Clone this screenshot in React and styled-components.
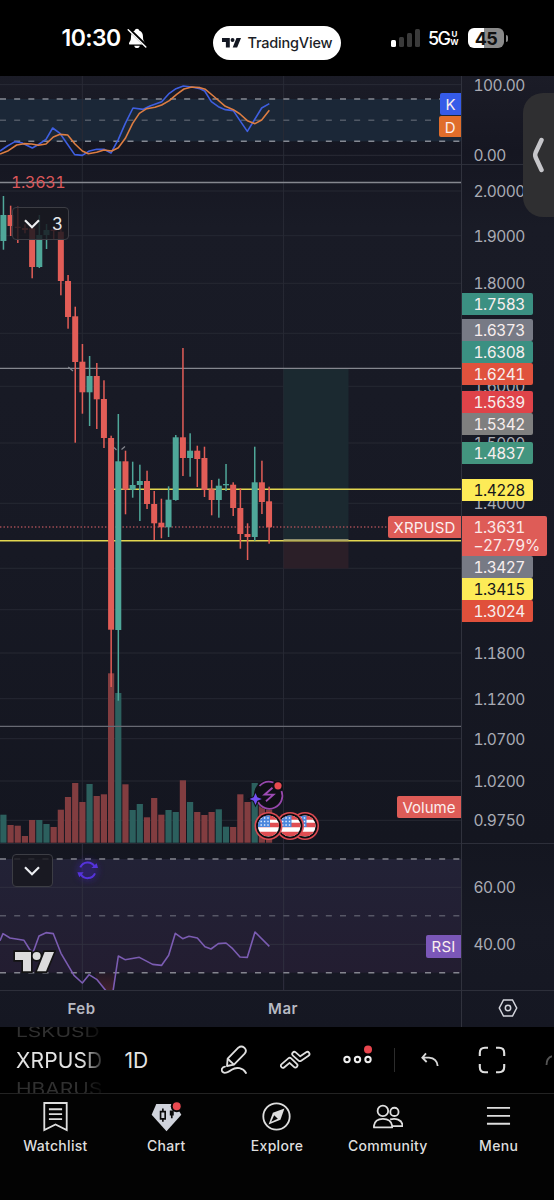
import styled, { createGlobalStyle } from "styled-components";

const GlobalStyle = createGlobalStyle`
  * {
    box-sizing: border-box;
  }
  body {
    margin: 0;
    background: #000;
    font-family: Inter, "Liberation Sans", sans-serif;
  }
`;

const UP = "#4fa799";
const DOWN = "#e25d57";
const DAY = 7.18;
const CHART_TOP = 76;

// side, high, low, body top, body bottom, volume top
const candles = [
  ["u", 196, 249.7, 215, 241, 814.7],
  ["d", 205.7, 236, 215, 226, 825],
  ["d", 206.7, 243, 226.7, 228, 825.7],
  ["d", 224.3, 233.3, 228, 230, 836],
  ["d", 227, 278.3, 228.3, 267, 820],
  ["u", 215, 268, 235, 267, 820],
  ["u", 224, 249, 230, 235, 824],
  ["d", 227, 240, 229.5, 231, 827],
  ["d", 229, 295.3, 231.7, 281, 809.7],
  ["d", 275, 328.7, 281, 317, 797],
  ["d", 306.7, 442.7, 316.3, 362, 783],
  ["d", 344, 413.7, 361.7, 392.3, 802],
  ["u", 356, 426, 376, 392.3, 784],
  ["d", 363, 429, 376, 399.3, 796],
  ["d", 380.3, 448, 399, 438, 794.3],
  ["d", 435.7, 687, 438, 629.7, 673.3],
  ["u", 414, 700.7, 461.3, 630, 693],
  ["d", 450.7, 514.3, 461.3, 489.7, 784.3],
  ["u", 461.7, 497.7, 485, 489.7, 810],
  ["u", 464.7, 521, 481, 485, 804],
  ["d", 470.7, 509, 481, 504, 817.3],
  ["d", 491, 540, 504, 523.3, 798],
  ["d", 498.7, 538.3, 522.7, 527.3, 814.7],
  ["u", 486.3, 537, 499.7, 527.3, 810],
  ["u", 435, 500.7, 437.3, 500, 812],
  ["d", 348, 476, 437.3, 458, 780.3],
  ["u", 433.3, 476.7, 450.7, 458, 802],
  ["d", 445.7, 487, 450.7, 459, 812],
  ["d", 446.7, 497, 458, 490, 815],
  ["d", 480, 515.3, 489.3, 500, 812],
  ["u", 478.7, 517.7, 485.7, 500, 809.3],
  ["u", 464, 491, 484, 485.3, 826.7],
  ["d", 482.3, 516, 484.7, 508, 827],
  ["d", 488.3, 548.7, 508, 534, 794.3],
  ["d", 523.3, 560, 534, 537, 802],
  ["u", 446.7, 540.7, 482.3, 537, 783],
  ["d", 460.7, 514, 482.3, 502, 803],
  ["d", 486.7, 543.7, 501.3, 527.3, 809.3],
];

const gridRows = [
  191, 235.7, 283.3, 333.3, 386.3, 443, 503.3, 568.3, 609.7, 653, 698.7, 738.7,
  781, 820.3,
];

const ticks = [
  { y: 85, label: "100.00" },
  { y: 155.5, label: "0.00" },
  { y: 191, label: "2.0000" },
  { y: 236, label: "1.9000" },
  { y: 283.5, label: "1.8000" },
  { y: 386.5, label: "1.6000" },
  { y: 443, label: "1.5000" },
  { y: 503.5, label: "1.4000" },
  { y: 653, label: "1.1800" },
  { y: 699, label: "1.1200" },
  { y: 739, label: "1.0700" },
  { y: 781, label: "1.0200" },
  { y: 820.5, label: "0.9750" },
  { y: 887.5, label: "60.00" },
  { y: 944.5, label: "40.00" },
];

const levels = [
  { y: 293, label: "1.7583", color: "#3b9082" },
  { y: 319, label: "1.6373", color: "#777a85" },
  { y: 341, label: "1.6308", color: "#3b9082" },
  { y: 363, label: "1.6241", color: "#e0523d" },
  { y: 391, label: "1.5639", color: "#df4349" },
  { y: 412.5, label: "1.5342", color: "#7f7f7f" },
  { y: 442, label: "1.4837", color: "#43957f" },
  { y: 478.5, label: "1.4228", color: "#fdeb57", dark: true },
  { y: 556, label: "1.3427", color: "#777a85" },
  { y: 578, label: "1.3415", color: "#fdeb57", dark: true },
  { y: 600, label: "1.3024", color: "#e0503b" },
];

const kLine =
  "0,243 22,228 45,215 65,218 97,234 118,222 138,208 158,174 180,190 202,222 224,254 247,256 268,243 290,238 312,238 333,249 355,208 376,160 399,114 430,118 450,108 485,95 508,70 528,56 550,48 575,51 600,56 614,63 634,95 655,110 676,119 700,122 722,155 742,184 763,150 785,114 808,101";
const dLine =
  "0,252 25,242 50,225 72,221 95,222 115,226 138,222 160,201 180,193 203,195 225,222 247,243 265,251 290,247 312,240 335,243 355,233 376,205 398,160 418,130 440,116 465,112 485,105 508,92 530,73 552,57 575,51 600,53 616,58 640,78 676,109 700,119 720,132 742,152 765,161 785,150 808,121";
const rsiLine =
  "0,302 9,281 30,294 72,301 90,330 100,335 117,288 138,278 160,281 183,340 222,406 247,429 267,404 290,418 325,461 338,461 355,348 375,359 418,352 458,373 485,376 506,346 526,280 548,296 567,289 592,294 615,320 633,327 655,311 678,309 698,326 720,351 742,352 765,276 808,319";

const TvMark = ({ width, color, outline }) => (
  <svg width={width} viewBox="-6 -6 129 70">
    <g
      fill={color}
      stroke={outline || "none"}
      strokeWidth="10"
      paintOrder="stroke"
    >
      <path d="M0 0H48V58H24V24H0Z" />
      <circle cx="65" cy="12" r="12" />
      <path d="M89 0H117L93 58H66Z" />
    </g>
  </svg>
);

const Chevron = () => (
  <svg width="16" height="10" viewBox="0 0 16 10">
    <path
      d="M1 1.2L8 8.2L15 1.2"
      fill="none"
      stroke="#eceef2"
      strokeWidth="2.2"
    />
  </svg>
);

const BellOff = () => (
  <svg width="20" height="21" viewBox="0 0 20 21">
    <path
      d="M10 .8C11.2 .8 12 1.6 12.2 2.5C15 3.4 16 6 16 9C16 13 17.5 13.5 18 15.3C18.1 16.2 17.6 16.5 17 16.5H3C2.3 16.5 1.9 16.2 2 15.3C2.5 13.5 4 13 4 9C4 6 5 3.4 7.8 2.5C8 1.6 8.8 .8 10 .8Z"
      fill="#fff"
    />
    <path
      d="M7.2 17.7H12.8C12.5 19.3 11.5 20 10 20C8.5 20 7.5 19.3 7.2 17.7Z"
      fill="#fff"
    />
    <path d="M1.8 1L19.8 18.6" stroke="#000" strokeWidth="3.2" />
    <path
      d="M1.2 1.8L18.8 19"
      stroke="#fff"
      strokeWidth="1.5"
      strokeLinecap="round"
    />
  </svg>
);

const StatusBar = () => (
  <Status>
    <Clock>
      10:30
      <BellOff />
    </Clock>
    <Island>
      <TvMark width="21" color="#131722" />
      <span>TradingView</span>
    </Island>
    <Signals>
      <Bars>
        <Bar $h={7} $on />
        <Bar $h={10} />
        <Bar $h={14} />
        <Bar $h={18} />
      </Bars>
      <Network>5G</Network>
      <Stack>
        <span>U</span>
        <span>W</span>
      </Stack>
      <Battery>45</Battery>
      <BatteryTip />
    </Signals>
  </Status>
);

const StochPane = () => (
  <Pane $height={88}>
    <Canvas viewBox="0 18 1383 264" $height={88}>
      <rect x="0" y="87" width="1383" height="127" fill="#1b2737" />
      <g stroke="#292b36" strokeWidth="3">
        <path d="M0 44H1383M0 256H1383M247 18V282M851 18V282" />
      </g>
      <g strokeDasharray="18 24.5" strokeWidth="4.5">
        <path d="M0 87H1383M0 214H1383" stroke="#858993" />
        <path d="M0 151H1383" stroke="#505865" />
      </g>
      <g fill="none" strokeWidth="4.8" strokeLinejoin="round">
        <polyline points={kLine} stroke="#3f5fe0" />
        <polyline points={dLine} stroke="#dd7d42" />
      </g>
    </Canvas>
    <PaneTag $top={17} $height={22} $color="#355be8">
      K
    </PaneTag>
    <PaneTag $top={39.5} $height={21.5} $color="#e06d2b">
      D
    </PaneTag>
  </Pane>
);

const Flag = ({ x }) => (
  <g transform={`translate(${x} 826)`}>
    <circle r="14" fill="#dc4a52" />
    <circle r="12.4" fill="#0c0c10" />
    <g clipPath="url(#flag)">
      <rect x="-11" y="-11" width="22" height="22" fill="#fff" />
      <path
        d="M-11 -8.5H11M-11 -1H11M-11 8H11"
        stroke="#df4d52"
        strokeWidth="4.3"
      />
      <rect x="-11" y="-11" width="12.5" height="12" fill="#4b87dd" />
      <path
        d="M-8 -8H1M-8 -4.5H1M-8 -1H1"
        stroke="#e8f0ff"
        strokeWidth="1.4"
        strokeDasharray="1.4 2"
      />
    </g>
  </g>
);

const PricePane = () => (
  <Pane $height={680}>
    <Canvas viewBox="0 164 461 680" $height={680}>
      <defs>
        <clipPath id="flag">
          <circle r="10.6" />
        </clipPath>
      </defs>
      <g stroke="#262833" strokeWidth="1">
        {gridRows.map((y) => (
          <path key={y} d={`M0 ${y}H461`} />
        ))}
        <path d="M82.3 164V844M283.5 164V844" />
      </g>
      <path d="M0 164.5H461M0 843.7H461" stroke="#2d2f3a" />
      <rect x="283.5" y="368.5" width="65" height="171.5" fill="#1b2930" />
      <rect x="283.5" y="540" width="65" height="28.5" fill="#2b1f28" />

      {candles.map(([side, , , , , vol], i) => (
        <rect
          key={i}
          x={0.3 + i * DAY}
          y={vol}
          width="6.2"
          height={842.7 - vol}
          fill={side === "u" ? "#2c605e" : "#823d40"}
        />
      ))}

      <g strokeWidth="1.3" stroke="#85878f">
        <path d="M0 182.5H461M0 368.3H461" />
        <path d="M0 726.3H461" stroke="#686a73" />
      </g>
      <path
        d="M0 527H388"
        stroke="#a54d55"
        strokeWidth="1.4"
        strokeDasharray="1.4 2.1"
      />
      <path
        d="M114 489.3H461M0 540.7H461"
        stroke="#e3d750"
        strokeWidth="1.5"
      />
      <path d="M283.5 539.7H348.5" stroke="#8c8b6c" strokeWidth="1.5" />

      {candles.map(([side, high, low, top, bottom], i) => (
        <g key={i} fill={side === "u" ? UP : DOWN}>
          <rect x={2.7 + i * DAY} y={high} width="1.5" height={low - high} />
          <rect x={0.4 + i * DAY} y={top} width="6" height={bottom - top} />
        </g>
      ))}
      <path
        d="M68.3 367L73 371M114 447.5L116.5 450M121.5 449.5L125 446.5"
        stroke="#85878f"
        strokeWidth="1.2"
      />

      <circle cx="269" cy="794.7" r="15" fill="#0f0f16" />
      <path
        d="M259.5 786A13 13 0 0 1 273.5 782.5M281.5 791A13 13 0 0 1 258 802"
        fill="none"
        stroke="#9647ac"
        strokeWidth="1.8"
      />
      <path
        d="M272.5 787.7L264.5 794.7H273.5L266 801.2"
        fill="none"
        stroke="#9e4bb5"
        strokeWidth="1.8"
      />
      <circle cx="278" cy="785.8" r="5" fill="#0f0f16" />
      <circle cx="278" cy="785.8" r="3.6" fill="#e84a50" />
      <path
        d="M255.5 793L257.3 797.3L261.8 799L257.3 800.8L255.5 805L253.7 800.8L249.5 799L253.7 797.3Z"
        fill="#7350f5"
        stroke="#0f0f16"
        strokeWidth="2"
        paintOrder="stroke"
      />
      <Flag x={305} />
      <Flag x={290} />
      <Flag x={268.5} />
    </Canvas>
    <LastPrice>1.3631</LastPrice>
    <Collapse $top={43} $width={57}>
      <Chevron />
      <span>3</span>
    </Collapse>
    <PaneTag $top={352} $height={22} $color="#de5c57" $spacing={0.15}>
      XRPUSD
    </PaneTag>
    <PaneTag $top={632} $height={22} $color="#de5c57">
      Volume
    </PaneTag>
  </Pane>
);

const RsiPane = () => (
  <Pane $height={146}>
    <Canvas viewBox="0 12 1383 438" $height={146}>
      <defs>
        <linearGradient id="band" x1="0" y1="0" x2="0" y2="1">
          <stop offset="0" stopColor="#222236" />
          <stop offset="1" stopColor="#231d31" />
        </linearGradient>
        <linearGradient id="oversold" x1="0" y1="0" x2="0" y2="1">
          <stop offset="0" stopColor="#2b1a28" />
          <stop offset="1" stopColor="#5a2630" />
        </linearGradient>
        <filter id="glow" x="-60%" y="-60%" width="220%" height="220%">
          <feGaussianBlur stdDeviation="9" />
        </filter>
      </defs>
      <rect x="0" y="57" width="1383" height="341" fill="url(#band)" />
      <g stroke="#30303f" strokeWidth="3">
        <path d="M0 142H1383M0 313H1383M247 12V450M851 12V450" />
      </g>
      <path
        d="M284 398H346L341 450H316L290 418Z"
        fill="url(#oversold)"
        opacity=".6"
      />
      <g strokeDasharray="18 24.5" strokeWidth="4.5">
        <path d="M0 57H1383M0 398H1383" stroke="#84858f" />
        <path d="M0 227H1383" stroke="#575766" />
      </g>
      <polyline
        points={rsiLine}
        fill="none"
        stroke="#7b5cb2"
        strokeWidth="4.8"
        strokeLinejoin="round"
      />
      <circle
        cx="263"
        cy="91"
        r="32"
        fill="#35208a"
        opacity=".55"
        filter="url(#glow)"
      />
      <g fill="none" stroke="#5533dc" strokeWidth="6">
        <path d="M241 82A24 24 0 0 1 284 80M285 100A24 24 0 0 1 242 102" />
      </g>
      <path d="M274 84H294L290 70ZM251 97H232L238 112Z" fill="#5533dc" />
    </Canvas>
    <Collapse $top={10} $width={41}>
      <Chevron />
    </Collapse>
    <Watermark>
      <TvMark width="43" color="#dcdcdc" outline="#141414" />
    </Watermark>
    <PaneTag $top={91} $height={22.5} $color="#7b57b8" $spacing={0.2}>
      RSI
    </PaneTag>
  </Pane>
);

const Scale = () => (
  <ScaleColumn>
    {ticks.map((t) => (
      <Tick key={t.label} $y={t.y}>
        {t.label}
      </Tick>
    ))}
    {levels.map((l) => (
      <Level key={l.label} $y={l.y} $color={l.color} $dark={l.dark}>
        {l.label}
      </Level>
    ))}
    <Current>
      <span>1.3631</span>
      <span>−27.79%</span>
    </Current>
    <PaneEdge $y={164} />
    <PaneEdge $y={843} />
    <PaneEdge $y={990} />
    <Settings width="20" height="18" viewBox="0 0 20 18">
      <g fill="none" stroke="#d3d5dc" strokeWidth="1.5">
        <path d="M5.5 1H14.5L18.7 9L14.5 17H5.5L1.3 9Z" />
        <circle cx="10" cy="9" r="2.7" />
      </g>
    </Settings>
    <Handle>
      <svg width="12" height="36" viewBox="0 0 12 36">
        <path
          d="M9.5 3L3.7 15.5Q2.7 18 3.7 20.5L9.5 33"
          fill="none"
          stroke="#c6c6ca"
          strokeWidth="4.5"
          strokeLinecap="round"
        />
      </svg>
    </Handle>
  </ScaleColumn>
);

const Toolbar = () => (
  <Tools>
    <Wheel>
      <Ghost $scale={0.72}>LSKUSD</Ghost>
      <Symbol>XRPUSD</Symbol>
      <Ghost $scale={0.8}>HBARUS</Ghost>
    </Wheel>
    <Interval>1D</Interval>
    <ToolGroup $gap={32}>
      <svg width="27" height="30" viewBox="0 0 81 90">
        <g
          fill="none"
          stroke="#dfdfdf"
          strokeWidth="5.5"
          strokeLinejoin="round"
          strokeLinecap="round"
        >
          <path d="M18 63L20 41L52 8Q61 1 70 8Q79 17 71 26L39 59Z" />
          <path d="M21 42L38 58" />
          <path d="M12 65C3 66 0 74 4 80C10 88 22 81 32 74C46 65 66 68 75 84" />
        </g>
      </svg>
      <svg width="31" height="20" viewBox="0 0 93 60">
        <g fill="none" strokeLinejoin="round" strokeLinecap="round">
          <path d="M9 47L29 30L46 46" stroke="#dfdfdf" strokeWidth="18" />
          <path d="M9 47L29 30L46 46" stroke="#000" strokeWidth="7.5" />
          <path d="M43 12L60 27L82 12" stroke="#dfdfdf" strokeWidth="18" />
          <path d="M43 12L60 27L82 12" stroke="#000" strokeWidth="7.5" />
        </g>
      </svg>
      <svg width="29" height="30" viewBox="0 0 29 30">
        <g fill="none" stroke="#efefef" strokeWidth="2">
          <circle cx="4" cy="14.5" r="2.7" />
          <circle cx="14.5" cy="14.5" r="2.7" />
          <circle cx="25" cy="14.5" r="2.7" />
        </g>
        <circle cx="25" cy="4.5" r="4" fill="#e9464e" />
      </svg>
    </ToolGroup>
    <Separator />
    <ToolGroup $gap={39}>
      <svg width="18" height="16" viewBox="0 0 54 48">
        <path
          d="M15 4L4 17L17 30M5 17H24Q48 19 50 42"
          fill="none"
          stroke="#d8d8d8"
          strokeWidth="5.5"
        />
      </svg>
      <svg width="28" height="28" viewBox="0 0 28 28">
        <path
          d="M1.8 10V7Q1.8 1.8 7 1.8H10M18 1.8H21Q26.2 1.8 26.2 7V10M26.2 18V21Q26.2 26.2 21 26.2H18M10 26.2H7Q1.8 26.2 1.8 21V18"
          fill="none"
          stroke="#dfdfdf"
          strokeWidth="2.1"
        />
      </svg>
      <svg width="7" height="10" viewBox="0 0 7 10">
        <path
          d="M1.5 10Q1.5 3 7 1.2"
          fill="none"
          stroke="#555"
          strokeWidth="1.8"
        />
      </svg>
    </ToolGroup>
  </Tools>
);

const line = {
  fill: "none",
  stroke: "#dedede",
  strokeWidth: 5.5,
};

const tabs = [
  {
    label: "Watchlist",
    icon: (
      <g {...line}>
        <path d="M13 6H81V88L47 71L13 88Z" />
        <path d="M27 25H67M27 40H67M27 55H67" />
      </g>
    ),
  },
  {
    label: "Chart",
    icon: (
      <g>
        <path d="M16 9H72L92 42L47 92L2 42Z" fill="#d0d3dc" />
        <path
          d="M29 32H43V54H29ZM36 23V32M36 54V63"
          fill="none"
          stroke="#0a0a0a"
          strokeWidth="5"
        />
        <path
          d="M57 29H69V44H57ZM60.5 42H65.5V52H60.5Z"
          fill="#0a0a0a"
        />
        <circle cx="78" cy="16" r="18" fill="#050505" />
        <circle cx="78" cy="16" r="12" fill="#ea4950" />
      </g>
    ),
  },
  {
    label: "Explore",
    icon: (
      <g>
        <circle cx="47" cy="47" r="40" {...line} />
        <path d="M71 23L59 57L23 71L36 36Z" fill="#dedede" />
        <path d="M40 43L51 54L31 63Z" fill="#050505" />
      </g>
    ),
  },
  {
    label: "Community",
    icon: (
      <g {...line}>
        <circle cx="33" cy="30" r="16" />
        <circle cx="68" cy="33" r="12.5" />
        <path
          d="M6 80V75C8 60 19 54 33 54C47 54 59 60 61 75V80Z"
          strokeLinejoin="round"
        />
        <path d="M55 56C72 51 90 57 92 71V76H62" />
      </g>
    ),
  },
  {
    label: "Menu",
    icon: <path d="M12 21H82M12 45H82M12 69H82" {...line} />,
  },
];

export default function App() {
  return (
    <Phone>
      <GlobalStyle />
      <StatusBar />
      <Chart>
        <div>
          <StochPane />
          <PricePane />
          <RsiPane />
          <TimeAxis>
            <span>Feb</span>
            <span>Mar</span>
          </TimeAxis>
        </div>
        <Scale />
      </Chart>
      <Toolbar />
      <Nav>
        {tabs.map((tab) => (
          <Tab key={tab.label}>
            <svg width="31" height="31" viewBox="0 0 94 94">
              {tab.icon}
            </svg>
            {tab.label}
          </Tab>
        ))}
      </Nav>
    </Phone>
  );
}

const Phone = styled.div`
  display: flex;
  flex-direction: column;
  width: 554px;
  height: 1200px;
  overflow: hidden;
  background: #030303;
`;

const Status = styled.header`
  display: grid;
  grid-template-columns: 213px 128px 213px;
  align-items: center;
  height: ${CHART_TOP}px;
  color: #fff;
  background: #000;
`;

const Clock = styled.div`
  display: flex;
  align-items: center;
  gap: 6px;
  padding-left: 61.5px;
  font-size: 23px;
  font-weight: 600;
  letter-spacing: -0.6px;
`;

const Island = styled.div`
  display: flex;
  align-items: center;
  gap: 5.5px;
  height: 34px;
  margin-top: 9px;
  padding-left: 8px;
  border-radius: 17px;
  background: #fff;
  color: #1b1d27;
  font-size: 14.5px;
  font-weight: 500;
  letter-spacing: -0.2px;
`;

const Signals = styled.div`
  display: flex;
  align-items: center;
  padding-left: 50px;
`;

const Bars = styled.div`
  display: flex;
  align-items: flex-end;
  gap: 3px;
  width: 37px;
  height: 18px;
`;

const Bar = styled.i`
  width: 5px;
  height: ${(props) => props.$h}px;
  border-radius: 1.5px;
  background: ${(props) => (props.$on ? "#fff" : "#3a3a3a")};
`;

const Network = styled.span`
  width: 22px;
  font-size: 18px;
  font-weight: 500;
  letter-spacing: -1.6px;
`;

const Stack = styled.div`
  display: flex;
  flex-direction: column;
  align-items: center;
  width: 9px;
  font-size: 8px;
  font-weight: 700;
  line-height: 8px;
`;

const Battery = styled.div`
  display: flex;
  align-items: center;
  justify-content: center;
  width: 36px;
  height: 20px;
  margin-left: 9px;
  border-radius: 6px;
  background: linear-gradient(90deg, #fff 45%, #8a8a8a 45%);
  color: #111;
  font-size: 18px;
  font-weight: 700;
  letter-spacing: -0.5px;
`;

const BatteryTip = styled.i`
  width: 2px;
  height: 7px;
  margin-left: 1.5px;
  border-radius: 0 3px 3px 0;
  background: #8a8a8a;
`;

const Chart = styled.main`
  display: grid;
  grid-template-columns: 461px 93px;
  height: 951px;
  background: linear-gradient(
    #1b1c27,
    #151621 8%,
    #191b26 16%,
    #171924 50%,
    #141620 80%,
    #171924 90%,
    #151722
  );
`;

const Pane = styled.section`
  position: relative;
  height: ${(props) => props.$height}px;
`;

const Canvas = styled.svg`
  display: block;
  width: 461px;
  height: ${(props) => props.$height}px;
`;

const PaneTag = styled.span`
  position: absolute;
  right: 0;
  top: ${(props) => props.$top}px;
  height: ${(props) => props.$height}px;
  padding: 0 5.5px;
  border-radius: 2px 0 0 2px;
  background: ${(props) => props.$color};
  color: #fbeeee;
  font-size: 15px;
  line-height: ${(props) => props.$height + 1.5}px;
  letter-spacing: ${(props) => props.$spacing || 0}px;
`;

const LastPrice = styled.span`
  position: absolute;
  left: 11px;
  top: 8px;
  color: #da575a;
  font-size: 16px;
  font-variant-numeric: tabular-nums;
  line-height: 20px;
  letter-spacing: -0.3px;
`;

const Collapse = styled.button`
  position: absolute;
  left: 12px;
  top: ${(props) => props.$top}px;
  display: flex;
  align-items: center;
  gap: 12px;
  width: ${(props) => props.$width}px;
  height: 33px;
  padding: 0 0 0 11px;
  border: 1px solid #3c3d44;
  border-radius: 4px;
  background: rgba(24, 24, 31, 0.84);
  color: #e6e7ea;
  font: 17px Inter, sans-serif;
`;

const Watermark = styled.div`
  position: absolute;
  left: 13px;
  top: 106px;
  display: flex;
`;

const TimeAxis = styled.div`
  display: flex;
  align-items: center;
  justify-content: space-between;
  height: 37px;
  padding: 0 163px 2px 67.5px;
  border-top: 1px solid #2d2f3a;
  color: #b7b9c2;
  font-size: 15px;
  font-weight: 600;
  letter-spacing: 0.5px;
`;

const ScaleColumn = styled.aside`
  position: relative;
  border-left: 1px solid #30323d;
  font-size: 15.5px;
  font-variant-numeric: tabular-nums;
  letter-spacing: -0.5px;
`;

const Tick = styled.span`
  position: absolute;
  left: 11.5px;
  top: ${(props) => props.$y - CHART_TOP - 9.5}px;
  color: #a9abb4;
  line-height: 20px;
`;

const Level = styled.span`
  position: absolute;
  left: 0;
  top: ${(props) => props.$y - CHART_TOP}px;
  width: 71px;
  height: 22px;
  padding-left: 11.5px;
  border-radius: 0 2px 2px 0;
  background: ${(props) => props.$color};
  color: ${(props) => (props.$dark ? "#15161c" : "#f7eeee")};
  line-height: 23px;
`;

const Current = styled.div`
  position: absolute;
  left: 0;
  top: 440px;
  display: flex;
  flex-direction: column;
  width: 85px;
  height: 40px;
  padding: 3px 0 0 11.5px;
  border-radius: 0 2px 2px 0;
  background: #de5c57;
  color: #fbe9e8;
  line-height: 18px;
`;

const PaneEdge = styled.i`
  position: absolute;
  left: 0;
  right: 0;
  top: ${(props) => props.$y - CHART_TOP}px;
  height: 1px;
  background: #2d2f3a;
`;

const Settings = styled.svg`
  position: absolute;
  left: 36px;
  top: 923px;
`;

const Handle = styled.div`
  position: absolute;
  right: 0;
  top: 17px;
  display: flex;
  align-items: center;
  width: 31px;
  height: 124px;
  padding-left: 9px;
  border-radius: 20px 0 0 20px;
  background: #2f2f31;
`;

const Tools = styled.div`
  display: flex;
  align-items: center;
  height: 67px;
  border-bottom: 1px solid #232323;
  background: #000;
`;

const Wheel = styled.div`
  display: flex;
  flex-direction: column;
  justify-content: center;
  width: 87px;
  height: 66px;
  margin-left: 16px;
  overflow: hidden;
  mask-image: linear-gradient(90deg, #000 76%, transparent 104%);
`;

const Symbol = styled.span`
  flex: none;
  color: #e4e4e4;
  font-size: 21px;
  line-height: 29px;
  letter-spacing: 0.15px;
`;

const Ghost = styled.span`
  flex: none;
  color: #303030;
  font-size: 21px;
  line-height: 28px;
  transform: scaleY(${(props) => props.$scale});
`;

const Interval = styled.span`
  width: 118px;
  padding-left: 21.5px;
  color: #e4e4e4;
  font-size: 21px;
`;

const ToolGroup = styled.div`
  display: flex;
  align-items: center;
  gap: ${(props) => props.$gap}px;
`;

const Separator = styled.i`
  width: 1px;
  height: 24px;
  margin: 0 26px 0 22px;
  background: #2c2c2c;
`;

const Nav = styled.nav`
  display: grid;
  grid-template-columns: repeat(5, 1fr);
  height: 106px;
  padding-top: 7px;
`;

const Tab = styled.div`
  display: flex;
  flex-direction: column;
  align-items: center;
  gap: 5px;
  color: #dedede;
  font-size: 14px;
  font-weight: 500;
  line-height: 18px;
  letter-spacing: 0.3px;
`;
